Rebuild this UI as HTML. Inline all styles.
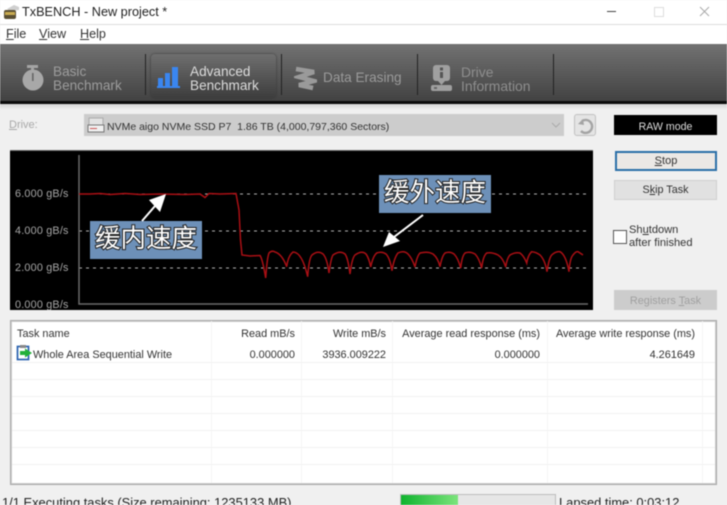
<!DOCTYPE html>
<html><head><meta charset="utf-8"><style>
html,body{margin:0;padding:0;width:727px;height:505px;overflow:hidden;background:#f0f0f0}
#p{position:absolute;left:0;top:0;width:727px;height:505px;overflow:hidden;font-family:"Liberation Sans","Noto Sans CJK SC",sans-serif;font-size:10.9px;color:#333;filter:blur(.45px)}
#p div{position:absolute;white-space:nowrap}
.r{text-align:right}
.c{text-align:center}
.t{color:#9a9a9a;font-size:13.6px;line-height:14px}
.h{background:#f1f1f1}
.v{background:#f5f5f5;width:1px;top:321px;height:162px}
.cn{background:#6d90b8;color:#fff;font-size:25.5px;line-height:31px;text-align:center;height:38px;width:112px;font-family:"Noto Sans CJK SC",sans-serif;-webkit-text-stroke:2px #222;paint-order:stroke fill}
u{text-decoration:underline}
</style></head><body><div id="p">
<div style="left:0;top:0;width:727px;height:24px;background:#fff"></div>
<div style="left:0;top:24px;width:727px;height:1px;background:#dcdcdc"></div>
<div style="left:0;top:25px;width:727px;height:19px;background:#fff"></div>
<svg style="position:absolute;left:2px;top:3px" width="18" height="17"><path d="M5 6L12 2L17 4L17 7L8 8Z" fill="#cfcfcf"/><rect x="2" y="7" width="12" height="9" rx="2" fill="#5a4f33"/><rect x="3" y="9" width="10" height="3" fill="#c9ab50"/></svg>
<div style="left:22px;top:4px;font-size:12.7px;line-height:16px;color:#222">TxBENCH - New project *</div>
<div style="left:607px;top:11px;width:9px;height:1px;background:#444"></div>
<div style="left:654px;top:7px;width:8px;height:8px;border:1px solid #ddd"></div>
<svg style="position:absolute;left:699px;top:6px" width="11" height="11"><path d="M1 1L10 10M10 1L1 10" stroke="#aaa" fill="none"/></svg>
<div style="left:6px;top:27px;font-size:12.6px;line-height:15px;color:#333"><u>F</u>ile</div>
<div style="left:39px;top:27px;font-size:12.6px;line-height:15px;color:#333"><u>V</u>iew</div>
<div style="left:80px;top:27px;font-size:12.6px;line-height:15px;color:#333"><u>H</u>elp</div>

<div style="left:0;top:44px;width:727px;height:57px;background:linear-gradient(#727272,#424242)"></div>
<div style="left:0;top:101px;width:727px;height:3px;background:#0a0a0a"></div>
<div style="left:0;top:104px;width:727px;height:6px;background:linear-gradient(#d4d4d4,#f0f0f0)"></div>
<div style="left:145px;top:54px;width:1px;height:41px;background:#222"></div>
<div style="left:281px;top:54px;width:1px;height:41px;background:#222"></div>
<div style="left:417px;top:54px;width:1px;height:41px;background:#222"></div>
<div style="left:553px;top:54px;width:1px;height:41px;background:#222"></div>
<div style="left:151px;top:54px;width:125px;height:44px;border-radius:4px;background:linear-gradient(#6f6f6f,#3d3d3d);box-shadow:0 0 2px #333"></div>

<svg style="position:absolute;left:21px;top:64px" width="24" height="27"><rect x="6" y="1" width="11" height="3" fill="#a4a4a4"/><rect x="10" y="3" width="3" height="5" fill="#a4a4a4"/><circle cx="12" cy="16" r="10.500" fill="#a8a8a8"/><rect x="11" y="9" width="1.600" height="8" fill="#666"/></svg>
<div class="t" style="left:53px;top:65px;color:#9c9c9c">Basic</div>
<div class="t" style="left:53px;top:79px;color:#9c9c9c">Benchmark</div>

<svg style="position:absolute;left:156px;top:65px" width="25" height="24"><rect x="2" y="13" width="5" height="9" fill="#3a86f0"/><rect x="9" y="8" width="5" height="14" fill="#3a86f0"/><rect x="16" y="2" width="6" height="20" fill="#3a86f0"/><rect x="1" y="21" width="23" height="2" fill="#3a86f0"/></svg>
<div class="t" style="left:190px;top:65px;color:#dcdcdc">Advanced</div>
<div class="t" style="left:190px;top:79px;color:#dcdcdc">Benchmark</div>

<svg style="position:absolute;left:294px;top:66px" width="23" height="25"><path d="M2 3L20 6L5 11L20 15L5 19L19 22" fill="none" stroke="#9a9a9a" stroke-width="4.500"/></svg>
<div class="t" style="left:323px;top:71px;color:#9a9a9a">Data Erasing</div>

<svg style="position:absolute;left:430px;top:64px" width="24" height="28"><rect x="3" y="1" width="17" height="16" rx="3" fill="#a0a0a0"/><path d="M8 17H15L11.500 21Z" fill="#a0a0a0"/><rect x="10" y="3.500" width="3" height="3" fill="#555"/><rect x="10" y="8" width="3" height="6" fill="#555"/><rect x="1" y="21" width="21" height="6" rx="2" fill="#a0a0a0"/><rect x="4" y="23" width="3" height="2" fill="#666"/></svg>
<div class="t" style="left:461px;top:65px;color:#8e8e8e;font-size:13.9px">Drive</div>
<div class="t" style="left:461px;top:79px;color:#8e8e8e;font-size:13.9px">Information</div>

<div style="left:9px;top:118px;font-size:11px;line-height:14px;color:#a8a8a8"><u>D</u>rive:</div>
<div style="left:84px;top:114px;width:480px;height:22px;background:#cccccc"></div>
<svg style="position:absolute;left:87px;top:117px" width="18" height="17"><rect x="2" y="1" width="14" height="7" fill="#e2e2e2" stroke="#aaa"/><rect x="1" y="8" width="16" height="7" fill="#f0f0f0" stroke="#777"/><rect x="3" y="11" width="7" height="1" fill="#c55"/></svg>
<div style="left:107px;top:121px;font-size:10.5px;line-height:13px;color:#333">NVMe aigo NVMe SSD P7&nbsp; 1.86 TB (4,000,797,360 Sectors)</div>
<svg style="position:absolute;left:551px;top:122px" width="10" height="7"><path d="M1 1L5 5L9 1" fill="none" stroke="#aaa"/></svg>
<div style="left:574px;top:114px;width:20px;height:20px;border:1.500px solid #c0c0c0;border-radius:3px;background:#e4e4e4"></div>
<svg style="position:absolute;left:576px;top:116px" width="20" height="20"><path d="M6 5A6.500 6.500 0 1 1 5 15" fill="none" stroke="#a4a4a4" stroke-width="2.400"/><path d="M2 8L8 9L7 3Z" fill="#a4a4a4"/></svg>
<div class="c" style="left:614px;top:115px;width:103px;height:20px;background:#000;color:#ddd;font-size:10.6px;line-height:24px">RAW mode</div>

<svg style="position:absolute;left:10px;top:150px" width="583" height="160">
<rect width="583" height="160" fill="#000"/>
<rect width="583" height="1" fill="#666"/>
<g stroke="#b0b0b0" stroke-dasharray="3 4" fill="none"><path d="M69 44H578M69 81H578M69 118H578"/></g>
<path d="M69 5V154H578" fill="none" stroke="#6a6a6a" stroke-width="1.500"/>
<g font-family="Liberation Sans,sans-serif" font-size="10.800" fill="#a6a6a6" letter-spacing=".2"><text x="5" y="47">6.000 gB/s</text><text x="5" y="84">4.000 gB/s</text><text x="5" y="121">2.000 gB/s</text><text x="5" y="158">0.000 gB/s</text></g>
<g transform="translate(-10,-150)"><path d="M79 194L90 194L100 193.500L110 194.500L125 193.500L140 194.500L160 194L185 194.500L200 194L205 197.500L209 193.500L220 194L236 193.500L239 210L240.500 240L242 255L250 256L260 255.500C262 258 264 268 265.700 278C266.500 268 267 258 269 253Q272 250 275 252Q282 254 286.700 266.700Q288 256 293 252Q302 252 307.700 276.700Q309 258 312 255Q318 250 323 254Q327 258 329 273Q331 258 333 255Q340 250 345 254Q348 258 350 274Q352 258 355 255Q362 250 366 254Q369 258 370.700 267Q373 256 376.700 253Q382 251 386 254Q390 258 392 270.700Q394 258 398 253Q404 250 408 254Q412 258 415 267Q417 256 420 253Q428 251 433 254Q438 258 440 266.700Q442 256 445 253Q450 251 454 254Q458 258 460.700 268Q462 256 465 253Q470 251 475 254Q479 258 481.700 268Q483 256 486.700 253Q492 252 498 255Q503 258 505.700 267Q507 258 510 255Q515 252 520 253Q524 256 526.700 263Q528 255 531.700 251.700Q536 252 540 255Q545 260 547 271.700Q549 258 551.700 255Q556 251 560 251.700Q566 255 569 271.700Q570 258 573 255Q576 251 578 251.700L583 255" fill="none" stroke="#a90f14" stroke-width="1.500"/></g>
</svg>
<div class="cn" style="left:90px;top:221px">缓内速度</div>
<div class="cn" style="left:379px;top:175px">缓外速度</div>
<svg style="position:absolute;left:0;top:0" width="727" height="505"><path d="M142 221L155 206" stroke="#fff" stroke-width="2"/><path d="M166 194L149 200L160 212Z" fill="#fff"/><path d="M423 215L394 237" stroke="#fff" stroke-width="2"/><path d="M383 247L389 232L400 241Z" fill="#fff"/></svg>

<div style="left:615px;top:151px;width:98px;height:16px;border:2px solid #2a6fa8;background:#ebe8e5"></div>
<div class="c" style="left:615px;top:154px;width:102px;font-size:11px;line-height:14px;color:#333"><u>S</u>top</div>
<div style="left:614px;top:180px;width:101px;height:18px;border:1px solid #cfcfcf;background:#e1e1e1"></div>
<div class="c" style="left:614px;top:183px;width:103px;font-size:10.8px;line-height:14px;color:#333">S<u>k</u>ip Task</div>
<div style="left:613px;top:230px;width:12px;height:12px;border:1px solid #555;background:#fff"></div>
<div style="left:629px;top:224px;font-size:11.1px;line-height:13px;color:#333">Sh<u>u</u>tdown<br>after finished</div>
<div style="left:614px;top:290px;width:103px;height:20px;background:#cccccc"></div>
<div class="c" style="left:614px;top:294px;width:103px;font-size:10.9px;line-height:14px;color:#a0a0a0">Registers <u>T</u>ask</div>

<div style="left:10px;top:320px;width:705px;height:163px;border:1px solid #a8a8a8;background:#fff;box-shadow:inset 0 0 0 1px #ccc"></div>
<div class="h" style="left:12px;top:362px;width:703px;height:1px"></div>
<div class="h" style="left:12px;top:379px;width:703px;height:1px"></div>
<div class="h" style="left:12px;top:396px;width:703px;height:1px"></div>
<div class="h" style="left:12px;top:413px;width:703px;height:1px"></div>
<div class="h" style="left:12px;top:430px;width:703px;height:1px"></div>
<div class="h" style="left:12px;top:447px;width:703px;height:1px"></div>
<div class="h" style="left:12px;top:464px;width:703px;height:1px"></div>
<div class="v" style="left:211px"></div><div class="v" style="left:301px"></div><div class="v" style="left:392px"></div><div class="v" style="left:547px"></div><div class="v" style="left:702px"></div>
<div style="left:17px;top:327px;line-height:14px">Task name</div>
<div class="r" style="left:211px;top:327px;width:84px;line-height:14px">Read mB/s</div>
<div class="r" style="left:301px;top:327px;width:85px;line-height:14px">Write mB/s</div>
<div class="r" style="left:392px;top:327px;width:148px;line-height:14px">Average read response (ms)</div>
<div class="r" style="left:547px;top:327px;width:148px;line-height:14px">Average write response (ms)</div>
<svg style="position:absolute;left:16px;top:344px" width="17" height="17"><rect x="1.500" y="2.500" width="11" height="13" fill="#fff" stroke="#2a62b0" stroke-width="1.700"/><rect x="4" y="1" width="6" height="3" fill="#888"/><path d="M4 7H9V4.500L16 9L9 13.500V11H4Z" fill="#22b03a"/></svg>
<div style="left:33px;top:348px;line-height:14px">Whole Area Sequential Write</div>
<div class="r" style="left:211px;top:348px;width:84px;line-height:14px">0.000000</div>
<div class="r" style="left:301px;top:348px;width:85px;line-height:14px">3936.009222</div>
<div class="r" style="left:392px;top:348px;width:148px;line-height:14px">0.000000</div>
<div class="r" style="left:547px;top:348px;width:148px;line-height:14px">4.261649</div>

<div style="left:2px;top:495px;font-size:12.9px;line-height:16px;color:#222">1/1 Executing tasks (Size remaining: 1235133 MB)</div>
<div style="left:400px;top:494px;width:154px;height:11px;background:#e6e6e6;border:1px solid #bcbcbc;border-bottom:0"></div>
<div style="left:401px;top:495px;width:57px;height:10px;background:linear-gradient(90deg,#0fb32e,#7ce47c)"></div>
<div style="left:559px;top:495px;font-size:12.9px;line-height:16px;color:#222">Lapsed time: 0:03:12</div>
</div></body></html>
